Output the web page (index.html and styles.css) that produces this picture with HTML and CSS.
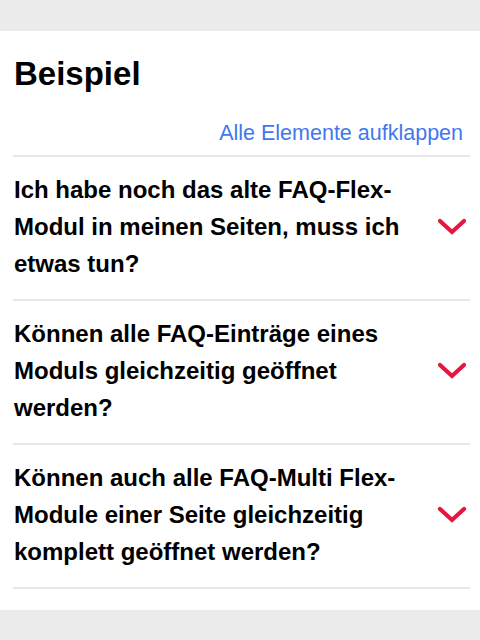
FILE: index.html
```html
<!DOCTYPE html>
<html lang="de">
<head>
<meta charset="utf-8">
<link rel="stylesheet" href="styles.css">
</head>
<body>
<div class="card">
  <h1 class="title">Beispiel</h1>
  <div class="toolbar"><a class="expand-all" href="#">Alle Elemente aufklappen</a></div>
  <div class="faq">
    <div class="item">
      <div class="question">Ich habe noch das alte FAQ-Flex-Modul in meinen Seiten, muss ich etwas tun?</div>
      <svg class="chev" width="30" height="18" viewBox="0 0 30 18"><path d="M3 3 L15 14 L27 3" fill="none" stroke="#e5173f" stroke-width="4.2" stroke-linecap="round" stroke-linejoin="miter"/></svg>
    </div>
    <div class="item">
      <div class="question">Können alle FAQ-Einträge eines Moduls gleichzeitig geöffnet werden?</div>
      <svg class="chev" width="30" height="18" viewBox="0 0 30 18"><path d="M3 3 L15 14 L27 3" fill="none" stroke="#e5173f" stroke-width="4.2" stroke-linecap="round" stroke-linejoin="miter"/></svg>
    </div>
    <div class="item">
      <div class="question">Können auch alle FAQ-Multi Flex-Module einer Seite gleichzeitig komplett geöffnet werden?</div>
      <svg class="chev" width="30" height="18" viewBox="0 0 30 18"><path d="M3 3 L15 14 L27 3" fill="none" stroke="#e5173f" stroke-width="4.2" stroke-linecap="round" stroke-linejoin="miter"/></svg>
    </div>
  </div>
</div>
</body>
</html>
```
FILE: styles.css
```css
html, body {
  margin: 0;
  padding: 0;
}
body {
  background: #ebebeb;
  padding-top: 31px;
  font-family: "Liberation Sans", Arial, sans-serif;
  color: #000;
}
.card {
  background: #fff;
  padding: 23px 10px 21px 13px;
}
.title {
  margin: 0 0 27px 1px;
  font-size: 33px;
  line-height: 40px;
  font-weight: bold;
}
.toolbar {
  display: flex;
  justify-content: flex-end;
  padding-right: 7px;
  margin-bottom: 10px;
}
.expand-all {
  font-size: 21.5px;
  line-height: 24px;
  color: #3f78f0;
  text-decoration: none;
}
.item {
  display: flex;
  align-items: center;
  justify-content: space-between;
  border-top: 2px solid #e6e6e6;
  padding: 14px 3px 17px 1px;
}
.item:last-child {
  border-bottom: 2px solid #e6e6e6;
}
.question {
  width: 410px;
  font-size: 24px;
  line-height: 37px;
  font-weight: bold;
}
.chev {
  display: block;
  flex: none;
}
```
